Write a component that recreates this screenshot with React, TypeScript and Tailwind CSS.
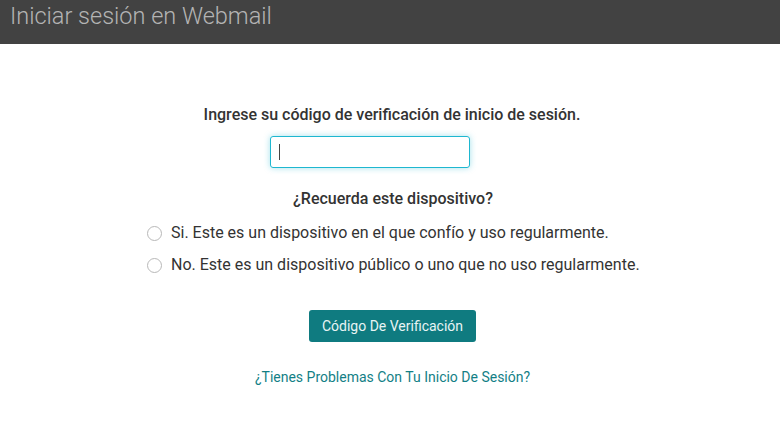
export default function App() {
  return (
    <div className="min-h-[447px] w-[780px] bg-white" style={{ fontFamily: 'Roboto, "Liberation Sans", sans-serif' }}>
      <header className="h-[44px] bg-[#424242] px-[10px] flex items-center">
        <h1 className="text-[23.5px] font-light text-[#b4b4b4] leading-none -mt-[10px]">Iniciar sesión en Webmail</h1>
      </header>

      <main className="flex flex-col pt-[60px]">
        <p className="text-center text-[16px] font-medium text-[#333] leading-[22px] pl-[4px]">
          Ingrese su código de verificación de inicio de sesión.
        </p>

        <div className="mt-[10px] pl-[270px]">
          <div className="relative w-[200px]">
            <input
              autoFocus
              className="w-[200px] h-[32px] rounded-[3px] border border-[#1eb7d0] px-2 outline-none shadow-[0_0_6px_rgba(30,183,208,0.4)]"
            />
            {/* caret */}
            <span className="absolute left-[9px] top-[8px] w-px h-[16px] bg-[#444]" />
          </div>
        </div>

        <p className="mt-[20px] text-center text-[16px] font-medium text-[#333] leading-[22px] pl-[6px]">
          ¿Recuerda este dispositivo?
        </p>

        <div className="mt-[12px] pl-[147px] flex flex-col gap-[10px] text-[16px] text-[#333]">
          <label className="flex items-center gap-[9px] leading-[22px]">
            <span className="w-[15px] h-[15px] rounded-full border border-[#b8b8b8] bg-white" />
            Si. Este es un dispositivo en el que confío y uso regularmente.
          </label>
          <label className="flex items-center gap-[9px] leading-[22px]">
            <span className="w-[15px] h-[15px] rounded-full border border-[#b8b8b8] bg-white" />
            No. Este es un dispositivo público o uno que no uso regularmente.
          </label>
        </div>

        <div className="mt-[34px] flex justify-center pl-[5px]">
          <button className="h-[32px] px-[13px] rounded-[3px] bg-[#0f7b80] text-[14px] text-[#e8f4f4]">
            Código De Verificación
          </button>
        </div>

        <div className="mt-[23px] text-center pl-[5px]">
          <a className="text-[14px] text-[#137f86]">¿Tienes Problemas Con Tu Inicio De Sesión?</a>
        </div>
      </main>
    </div>
  );
}
